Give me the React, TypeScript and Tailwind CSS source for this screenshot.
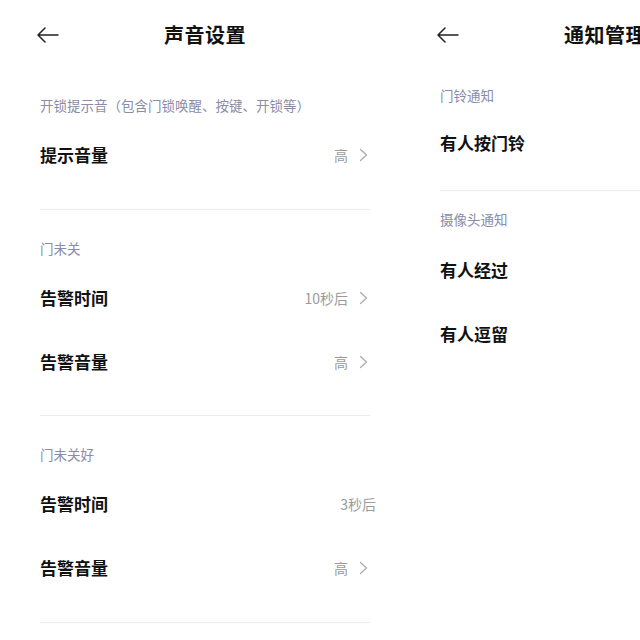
import React from "react";

interface Row {
  label: string;
  value?: string;
  arrow?: boolean;
  pullRight?: boolean;
}

interface Section {
  title: string;
  rows: Row[];
}

const soundSections: Section[] = [
  {
    title: "开锁提示音（包含门锁唤醒、按键、开锁等）",
    rows: [{ label: "提示音量", value: "高", arrow: true }],
  },
  {
    title: "门未关",
    rows: [
      { label: "告警时间", value: "10秒后", arrow: true },
      { label: "告警音量", value: "高", arrow: true },
    ],
  },
  {
    title: "门未关好",
    rows: [
      { label: "告警时间", value: "3秒后", pullRight: true },
      { label: "告警音量", value: "高", arrow: true },
    ],
  },
];

function BackArrow() {
  return (
    <svg width="24" height="18" viewBox="0 0 24 18" fill="none" className="text-[#222]">
      <path d="M22 9H2M9 2L2 9l7 7" stroke="currentColor" strokeWidth="1.5" strokeLinecap="round" strokeLinejoin="round" />
    </svg>
  );
}

function Chevron() {
  return (
    <svg width="9" height="14" viewBox="0 0 9 14" fill="none" className="text-[#aaaaaa]">
      <path d="M1.5 1.5L7.5 7l-6 5.5" stroke="currentColor" strokeWidth="1.2" strokeLinecap="round" strokeLinejoin="round" />
    </svg>
  );
}

function Header({ title }: { title: string }) {
  return (
    <div className="h-[70px] grid grid-cols-[1fr_auto_1fr] items-center pl-[36px] pr-[26px]">
      <div className="flex">
        <BackArrow />
      </div>
      <div className="text-[20px] font-bold text-[#111] tracking-[0.5px] whitespace-nowrap">{title}</div>
      <div />
    </div>
  );
}

function SettingRow({ row }: { row: Row }) {
  return (
    <div className="h-[64px] flex items-center justify-between">
      <span className="text-[17px] font-semibold text-[#111]">{row.label}</span>
      {row.value && (
        <div className={row.pullRight ? "flex items-center -mr-[8px]" : "flex items-center gap-[11px]"}>
          <span className="text-[14px] text-[#9b9b9b]">{row.value}</span>
          {row.arrow && <Chevron />}
        </div>
      )}
    </div>
  );
}

export default function App() {
  return (
    <div
      className="w-[640px] h-[640px] bg-white flex overflow-hidden"
      style={{ fontFamily: '"Noto Sans CJK SC", "Noto Sans", sans-serif' }}
    >
      {/* 声音设置 */}
      <div className="w-[400px] shrink-0 flex flex-col">
        <Header title="声音设置" />
        <div className="pl-[40px] pr-[30px]">
          {soundSections.map((section, i) => (
            <div
              key={i}
              className={
                i === 0
                  ? "pt-[25px] pb-[22px] border-b border-[#ececec]"
                  : i === 1
                    ? "pt-[28px] pb-[21px] border-b border-[#ececec]"
                    : "pt-[28px] pb-[22px] border-b border-[#ececec]"
              }
            >
              <div className="h-[20px] leading-[20px] text-[13.5px] text-[#8a8ca8] whitespace-nowrap">{section.title}</div>
              <div className="mt-[8px] pr-[2px]">
                {section.rows.map((row, j) => (
                  <SettingRow key={j} row={row} />
                ))}
              </div>
            </div>
          ))}
        </div>
      </div>

      {/* 通知管理 */}
      <div className="w-[400px] shrink-0 flex flex-col">
        <Header title="通知管理" />
        <div className="pl-[40px] pr-[30px]">
          <div className="pt-[15px] pb-[15px] border-b border-[#ececec]">
            <div className="h-[20px] leading-[20px] text-[13.5px] text-[#8a8ca8]">门铃通知</div>
            <div className="mt-[6px]">
              <SettingRow row={{ label: "有人按门铃" }} />
            </div>
          </div>
          <div className="pt-[18px]">
            <div className="h-[20px] leading-[20px] text-[13.5px] text-[#8a8ca8]">摄像头通知</div>
            <div className="mt-[9px]">
              <SettingRow row={{ label: "有人经过" }} />
              <SettingRow row={{ label: "有人逗留" }} />
            </div>
          </div>
        </div>
      </div>
    </div>
  );
}
